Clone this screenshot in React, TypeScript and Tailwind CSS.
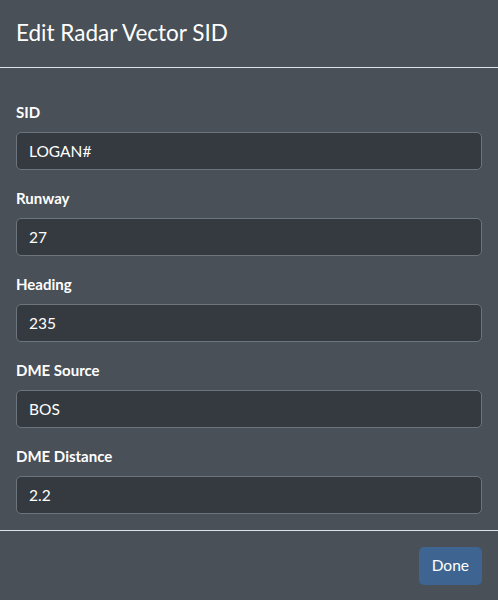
const fields = [
  { label: 'SID', value: 'LOGAN#' },
  { label: 'Runway', value: '27' },
  { label: 'Heading', value: '235' },
  { label: 'DME Source', value: 'BOS' },
  { label: 'DME Distance', value: '2.2' },
];

export default function App() {
  return (
    <div
      className="w-[498px] h-[600px] bg-[#495057] text-white flex flex-col overflow-hidden"
      style={{ fontFamily: 'Lato, "Open Sans", sans-serif' }}
    >
      {/* Header */}
      <div className="h-[68px] shrink-0 px-4 flex items-center border-b border-[#dee2e6]">
        <h2 className="text-[22.5px] leading-none">Edit Radar Vector SID</h2>
      </div>

      {/* Body */}
      <div className="flex-1 min-h-0 px-4 pt-[35px] flex flex-col gap-[19px]">
        {fields.map((f) => (
          <div key={f.label}>
            <label className="block text-[15px] font-bold mb-[11px] leading-[18px]">{f.label}</label>
            <input
              className="w-full h-[38px] px-3 rounded-[5px] bg-[#343a40] border border-[#6c757d] text-[15.5px] text-white outline-none"
              defaultValue={f.value}
            />
          </div>
        ))}
      </div>

      {/* Footer */}
      <div className="h-[70px] shrink-0 border-t border-[#dee2e6] px-4 flex items-center justify-end">
        <button className="h-[38px] px-[13px] rounded-[5px] bg-[#3e6591] text-[15.5px] text-white">
          Done
        </button>
      </div>
    </div>
  );
}
